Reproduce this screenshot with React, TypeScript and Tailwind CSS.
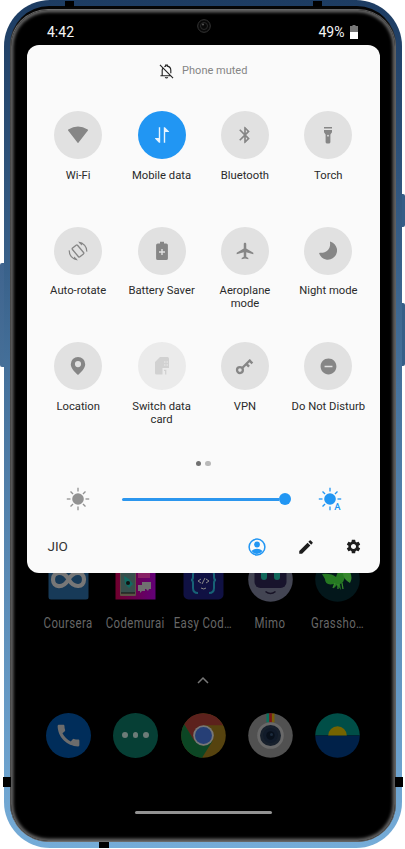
import type { ReactNode } from "react";
import {
  MdAirplanemodeActive,
  MdBluetooth,
  MdCall,
  MdDoNotDisturbOn,
  MdEdit,
  MdSettings,
} from "react-icons/md";

const WifiIcon = () => (
  <svg width="22" height="18" viewBox="0 0 22 18" fill="currentColor">
    <path d="M11 17.2 1.1 4.4Q0.7 3.8 1.3 3.5Q11-2.6 20.7 3.5Q21.3 3.8 20.9 4.4Z" />
  </svg>
);

const DataIcon = () => (
  <svg width="16" height="18" viewBox="0 0 16 18" fill="currentColor">
    <path d="M4.8 1.2H6.2V16.8H5L.9 12.6Q.7 12 1.4 12H4.8Z" />
    <path d="M9.8 1.2H10.9L15.1 5.4Q15.3 6 14.6 6H11.2V16.8H9.8Z" />
  </svg>
);

const TorchIcon = () => (
  <svg width="10" height="19" viewBox="0 0 10 19" fill="currentColor">
    <path d="M1 1h8v1.5H1zM1 4h8v2.2L7.4 8.5V16q0 1.4-1.2 1.4H3.8Q2.6 17.4 2.6 16V8.5L1 6.2z" />
    <circle cx="5" cy="9.7" r=".9" fill="#e1e1e1" />
  </svg>
);

const RotateIcon = () => (
  <svg width="20" height="20" viewBox="-10 -10 20 20" fill="none" stroke="currentColor">
    <rect x="-3.3" y="-5.7" width="6.600" height="11.400" rx="1" strokeWidth="1.300" transform="rotate(-40)" />
    <path d="M1-8.600A8.700 8.700 0 0 1 8.700.6M-1 8.600A8.700 8.700 0 0 1-8.700-.6" strokeWidth="1.200" />
    <path d="M0-9.400 4.500-7.900 3.600-5.400ZM0 9.400-4.500 7.900-3.600 5.400Z" fill="currentColor" stroke="none" />
  </svg>
);

const BatterySaverIcon = () => (
  <svg width="12" height="20" viewBox="0 0 12 20">
    <path d="M4 .8h4v1.600h2.200q1.700 0 1.700 1.700v13.300q0 1.700-1.700 1.700H1.800Q.1 19.100.1 17.400V4.100q0-1.700 1.700-1.700H4z" fill="currentColor" />
    <path d="M6 8v6M3 11h6" stroke="#e1e1e1" strokeWidth="1.400" />
  </svg>
);

const MoonIcon = () => (
  <svg width="20" height="20" viewBox="0 0 20 20" fill="currentColor">
    <path d="M12 1.200a.5.5 0 0 1 .7-.5A9.200 9.200 0 1 1 1.200 12.600q-.2-.8.600-.8C8 12.400 13 8.500 12 1.200Z" />
  </svg>
);

const PinIcon = () => (
  <svg width="16" height="20" viewBox="0 0 16 20">
    <path fillRule="evenodd" d="M8 1a7.200 7.200 0 0 0-7.200 7.200C.8 12.500 5 16 8 19c3-3 7.200-6.500 7.200-10.800A7.200 7.200 0 0 0 8 1Zm0 4a3.100 3.100 0 1 1 0 6.200A3.100 3.100 0 0 1 8 5Z" fill="currentColor" />
  </svg>
);

const SimIcon = () => (
  <svg width="16" height="20" viewBox="0 0 16 20">
    <path d="M6 1h7.500q1.500 0 1.500 1.500V12H8.500v6.500H2.500Q1 18.500 1 17V6Z" fill="#d1d1d1" />
    <path d="M10 6h1.500M12.500 6H14M10 9h1.500M12.500 9H14" stroke="#ebebeb" strokeWidth="1.200" />
    <path d="M10 14.400h1.700v4.200" stroke="#d1d1d1" strokeWidth="1.300" fill="none" />
  </svg>
);

const KeyIcon = () => (
  <svg width="19" height="19" viewBox="0 0 20 20" fill="none" stroke="currentColor">
    <circle cx="5.200" cy="13.800" r="3.100" strokeWidth="2.400" />
    <path d="M7.600 11.600 16.300 2.900" strokeWidth="2.500" />
    <path d="m15 3.500 3.300 3.300M11.600 6.900l3.200 3.200" strokeWidth="2.500" />
  </svg>
);

const MutedBell = () => (
  <svg width="15" height="15" viewBox="0 0 16 16" fill="none" stroke="#222" strokeWidth="1.200">
    <path d="M3.400 12.200V6.700c0-1 .3-1.900.9-2.600M5.800 2.900q.7-.4 1.300-.6V1.200h1.800v1.100c2.200.5 3.700 2.200 3.700 4.400v3.200M1.500 12.500h11.200M1 1l14 14" />
    <path d="M6.500 14.200q1.500 1.300 3 0" />
  </svg>
);

function Sun({ auto = false }: { auto?: boolean }) {
  return (
    <svg width="24" height="24" viewBox="-12 -12 24 24" className="overflow-visible">
      <circle r="5.800" fill="currentColor" />
      <g stroke="currentColor" strokeWidth="1.300">
        {[0, 45, 90, 135, 180, 225, 270, 315]
          .filter((a) => !auto || a !== 45)
          .map((a) => (
            <path key={a} d={a % 90 ? "M7 0h3.600" : "M7.500 0h3.700"} transform={`rotate(${a})`} />
          ))}
      </g>
      {auto && (
        <text x="4.200" y="11.300" fontSize="9.500" fontWeight="500" fontFamily="Roboto, sans-serif" fill="currentColor">
          A
        </text>
      )}
    </svg>
  );
}

const tiles: { label: string; icon: ReactNode; look?: string }[] = [
  { label: "Wi-Fi", icon: <WifiIcon /> },
  { label: "Mobile data", icon: <DataIcon />, look: "bg-[#2196f3] text-[#e8f4fe]" },
  { label: "Bluetooth", icon: <MdBluetooth size={20} /> },
  { label: "Torch", icon: <TorchIcon /> },
  { label: "Auto-rotate", icon: <RotateIcon /> },
  { label: "Battery Saver", icon: <BatterySaverIcon /> },
  { label: "Aeroplane mode", icon: <MdAirplanemodeActive size={20} /> },
  { label: "Night mode", icon: <MoonIcon /> },
  { label: "Location", icon: <PinIcon /> },
  { label: "Switch data card", icon: <SimIcon />, look: "bg-[#ebebeb] text-[#d1d1d1]" },
  { label: "VPN", icon: <KeyIcon /> },
  { label: "Do Not Disturb", icon: <MdDoNotDisturbOn size={19} /> },
];

const Coursera = () => (
  <svg width="45" height="45" viewBox="0 0 45 45">
    <rect x="2.500" y="2.500" width="40" height="40" rx="2.500" fill="#173a58" />
    <path d="M22.500 22C17 13 7 14.500 7 22.500S17 32 22.500 22.500S38 14.500 38 22.500S28 32 22.500 22Z" fill="none" stroke="#777" strokeWidth="4.200" />
  </svg>
);
const Codemurai = () => (
  <svg width="45" height="45" viewBox="0 0 45 45">
    <defs>
      <linearGradient id="cm"><stop stopColor="#70002d" /><stop offset="1" stopColor="#620077" /></linearGradient>
    </defs>
    <rect x="2.500" y="2.500" width="40" height="40" fill="url(#cm)" />
    <rect x="7" y="7" width="16" height="32" rx="1" fill="#5b5346" />
    <path d="M8 16h14v20H8z" fill="#374f4c" />
    <path d="M8 36h14" stroke="#111" />
    <path d="M11 19l5 3 4 5-4 4-4-4z" fill="#126a61" />
    <circle cx="15" cy="26" r="2" fill="#111" />
    <path d="M25 12h12v9H25z" fill="#872064" />
    <path d="M29 25h9v7h-2l-1 2-2-2h-4zM25 28h7v6h-3l-2 2v-2h-2z" fill="#707070" />
  </svg>
);
const EasyCoding = () => (
  <svg width="45" height="45" viewBox="0 0 45 45">
    <rect x="2.500" y="2.500" width="40" height="40" rx="5" fill="#101143" />
    <path d="M17 13q-5 0-5 5v2q0 3-2 3 2 0 2 3v5q0 5 5 5M28 13q5 0 5 5v2q0 3 2 3-2 0-2 3v5q0 5-5 5" fill="none" stroke="#176276" strokeWidth="2" />
    <path d="m20 22-3 2 3 2m5-4 3 2-3 2m-1-5-3 6m-1 4q3 2 5 0" fill="none" stroke="#888" />
  </svg>
);
const Mimo = () => (
  <svg width="45" height="45" viewBox="0 0 45 45">
    <circle cx="22.500" cy="22.500" r="22.300" fill="#434553" />
    <rect x="6.500" y="9" width="32" height="22" rx="6" fill="#18142c" />
    <rect x="13" y="13" width="6" height="10" rx="3" fill="#11675a" />
    <rect x="26" y="13" width="6" height="10" rx="3" fill="#11675a" />
    <path d="M17.500 34.500q5 4 10 0" fill="none" stroke="#171326" strokeWidth="1.600" />
  </svg>
);
const Grasshopper = () => (
  <svg width="45" height="45" viewBox="0 0 45 45">
    <circle cx="22.500" cy="22.500" r="22.300" fill="#03171b" />
    <path d="M7 17q9-1 14 3 3-9 8-13l1 12q-1 7-5 8l1 6-4-5-3 3v-4q-9 2-9-5z" fill="#257922" />
    <path d="M29 7q2 6 6 8 3 6 0 11-6-3-7-9z" fill="#36882d" />
    <path d="m20 26-2 5m5-4v5m4-6 1 6" stroke="#36882d" strokeWidth="1.300" />
  </svg>
);

const apps = [
  { name: "Coursera", icon: <Coursera /> },
  { name: "Codemurai", icon: <Codemurai /> },
  { name: "Easy Cod…", icon: <EasyCoding /> },
  { name: "Mimo", icon: <Mimo /> },
  { name: "Grassho…", icon: <Grasshopper /> },
];

const Chrome = () => (
  <svg width="45" height="45" viewBox="-22.500 -22.500 45 45">
    <circle r="22.300" fill="#56430f" />
    <path d="M-19.300-11.150A22.300 22.300 0 0 1 19.600-10.300H0L-9.200 5.300Z" fill="#5c211c" />
    <path d="M-19.300-11.150A22.300 22.300 0 0 0-1.500 22.250L9.200 5.300 0 10.600-9.200 5.300Z" fill="#0c4624" />
    <circle r="10.300" fill="#777" />
    <circle r="8.500" fill="#263f76" />
  </svg>
);
const Camera = () => (
  <svg width="45" height="45" viewBox="-22.500 -22.500 45 45">
    <circle r="22.300" fill="#515151" />
    <path d="M-4-22h2.700v9H-4z" fill="#08735f" />
    <path d="M-1.300-22.300h2.700v9.300h-2.700z" fill="#7c1616" />
    <path d="M1.400-22H4v9H1.400z" fill="#796006" />
    <circle r="13.300" fill="#696969" />
    <circle r="10.500" fill="#17202c" />
    <circle r="7.500" fill="#111b2a" />
    <circle r="4.200" fill="#08101b" />
    <circle cx="1" cy="-1" r="1.500" fill="#1c2b3d" />
  </svg>
);
const Gallery = () => (
  <svg width="45" height="45" viewBox="-22.500 -22.500 45 45">
    <path d="M-22.300 0a22.300 22.300 0 0 1 44.600 0z" fill="#004e47" />
    <path d="M-22.300 0a22.300 22.300 0 0 0 44.600 0z" fill="#002149" />
    <path d="M-9.300 0a9.300 9.300 0 0 1 18.600 0z" fill="#746300" />
  </svg>
);

function Panel() {
  return (
    <section className="ml-[11px] h-[528px] w-[353.500px] shrink-0 rounded-xl bg-[#fafafa] pt-[18px]">
      <div className="flex h-4 items-center justify-center gap-[8px] pt-px text-[11px] text-[#858585]">
        <MutedBell />
        Phone muted
      </div>
      <div className="mx-[10px] mt-[32px] grid h-[347px] grid-cols-4 grid-rows-[115.500px_115.500px_115.500px]">
        {tiles.map((t) => (
          <div key={t.label} className="flex flex-col items-center">
            <div className={`flex size-[48px] shrink-0 items-center justify-center rounded-full ${t.look ?? "bg-[#e1e1e1] text-[#868686]"}`}>
              {t.icon}
            </div>
            <div className="mt-[9.500px] w-[78px] text-center text-[11.250px] leading-[13px] text-[#2a2a2a]">
              {t.label}
            </div>
          </div>
        ))}
      </div>
      <div className="flex h-[11px] items-center justify-center gap-1">
        <span className="size-[5.500px] rounded-full bg-[#707070]" />
        <span className="size-[5.500px] rounded-full bg-[#b9b9b9]" />
      </div>
      <div className="mt-[18px] flex h-6 items-center pl-[39px]">
        <span className="text-[#929292]"><Sun /></span>
        <div className="ml-[32px] flex w-[169px] items-center">
          <div className="h-[3px] flex-1 rounded-l-full bg-[#2b96ee]" />
          <div className="size-3 rounded-full bg-[#2196f3]" />
        </div>
        <span className="ml-[27px] text-[#2196f3]"><Sun auto /></span>
      </div>
      <div className="mt-[25.500px] flex h-5 items-center pl-[21px]">
        <span className="w-[200px] text-[13.500px] text-[#333]">JIO</span>
        <svg width="18" height="18" viewBox="0 0 18 18">
          <circle cx="9" cy="9" r="7.900" fill="none" stroke="#2196f3" strokeWidth="1.500" />
          <circle cx="9" cy="6.500" r="2.900" fill="#2196f3" />
          <path d="M3.300 13q5.700-4.500 11.400 0Q9 19 3.300 13Z" fill="#2196f3" />
        </svg>
        <MdEdit size={18} className="ml-[31px] text-[#1d1d1d]" />
        <MdSettings size={17} className="ml-[30px] text-[#1d1d1d]" />
      </div>
    </section>
  );
}

export default function App() {
  return (
    <main className="relative h-[849px] w-[405px] overflow-hidden bg-white font-[Roboto,sans-serif]">
      {/* Side keys */}
      <i className="absolute left-0 top-[263px] h-[104px] w-[6px] rounded-l-[2px] bg-linear-to-b from-[#40658f] to-[#456f98]" />
      <i className="absolute left-[400px] top-[194px] h-[33px] w-[5px] rounded-r-[2px] bg-[#355d87]" />
      <i className="absolute left-[400px] top-[303px] h-[63px] w-[5px] rounded-r-[2px] bg-[#365f88]" />
      <div className="relative ml-[4px] h-[848px] w-[398px] rounded-[46px] bg-linear-to-b from-[#1d3c62] via-[#46729c] via-45% to-[#75acd8] px-[6px] pb-[6px] pt-[6px]">
        {/* Antenna bands */}
        <i className="absolute left-[61px] top-[1px] h-[6px] w-[9px] bg-black" />
        <i className="absolute left-[309px] top-[1px] h-[6px] w-[9px] bg-black" />
        <i className="absolute -left-px top-[777px] h-[10px] w-[8px] bg-black" />
        <i className="absolute right-[-1px] top-[777px] h-[10px] w-[8px] bg-black" />
        <i className="absolute left-[95px] top-[842px] h-[6px] w-[10px] bg-black" />
        <div className="h-full rounded-[39px] bg-linear-to-b from-[#050505] from-1% to-[#454545] to-5% pt-[3px]">
          <div className="h-full rounded-[38px] bg-linear-to-r from-[#454545] via-[#707070] via-1% to-[#606060] p-px">
            <div className="h-full overflow-hidden rounded-[37px] bg-black pb-[4px] pl-[4.500px] pr-[4px] pt-[3px] shadow-[inset_0_0_3px_2.500px_#606060]">
              <div className="flex h-full w-[375px] flex-col">
                <header className="relative flex h-[32px] shrink-0 items-center pl-[31.500px] pr-[33px] pt-[6px] text-[14px] text-[#f4f4f4]">
                  <span className="flex-1">4:42</span>
                  <span>49%</span>
                  <svg width="8" height="14" viewBox="0 0 8 14" className="ml-[5px]">
                    <path d="M2.500 0h3v1H8v6H0V1h2.500z" fill="#777" />
                    <path d="M0 7h8v7H0z" fill="#fff" />
                  </svg>
                  <svg width="14" height="14" viewBox="0 0 14 14" className="absolute left-[181px] top-[6px]">
                    <circle cx="7" cy="7" r="6.300" fill="#080808" stroke="#353535" />
                    <circle cx="7" cy="7" r="3.500" fill="none" stroke="#292929" />
                    <circle cx="6" cy="5.500" r="1" fill="#555" />
                  </svg>
                </header>
                <Panel />
                <div className="mx-[19px] flex h-[28.500px] shrink-0 items-end overflow-hidden">
                  {apps.map((a) => (
                    <div key={a.name} className="flex flex-1 justify-center">{a.icon}</div>
                  ))}
                </div>
                <div className="mx-[19px] mt-[14px] flex h-4 shrink-0 items-center text-[14px] tracking-[0.500px] text-[#676767]">
                  {apps.map((a) => (
                    <div key={a.name} className="flex w-0 flex-1 justify-center">
                      <span className="scale-x-[0.815] whitespace-nowrap">{a.name}</span>
                    </div>
                  ))}
                </div>
                <svg width="14" height="8" viewBox="0 0 14 8" className="mt-[44px] shrink-0 self-center">
                  <path d="m2 7 5-5 5 5" fill="none" stroke="#777" strokeWidth="1.500" />
                </svg>
                <div className="mx-[19px] mt-[29px] flex h-[45px] shrink-0 *:flex *:flex-1 *:justify-center">
                  <div><span className="flex size-[45px] items-center justify-center rounded-full bg-[#002d5a] text-[#6c6c6c]"><MdCall size={29} /></span></div>
                  <div>
                    <span className="flex size-[45px] items-center justify-center gap-[5px] rounded-full bg-[#063f35] *:size-[5.500px] *:rounded-full *:bg-[#6c7c78]">
                      <i /><i /><i />
                    </span>
                  </div>
                  <div><Chrome /></div>
                  <div><Camera /></div>
                  <div><Gallery /></div>
                </div>
                <div className="mt-[53px] h-[3px] w-[137px] shrink-0 self-center rounded-full bg-[#929292]" />
              </div>
            </div>
          </div>
        </div>
      </div>
    </main>
  );
}
